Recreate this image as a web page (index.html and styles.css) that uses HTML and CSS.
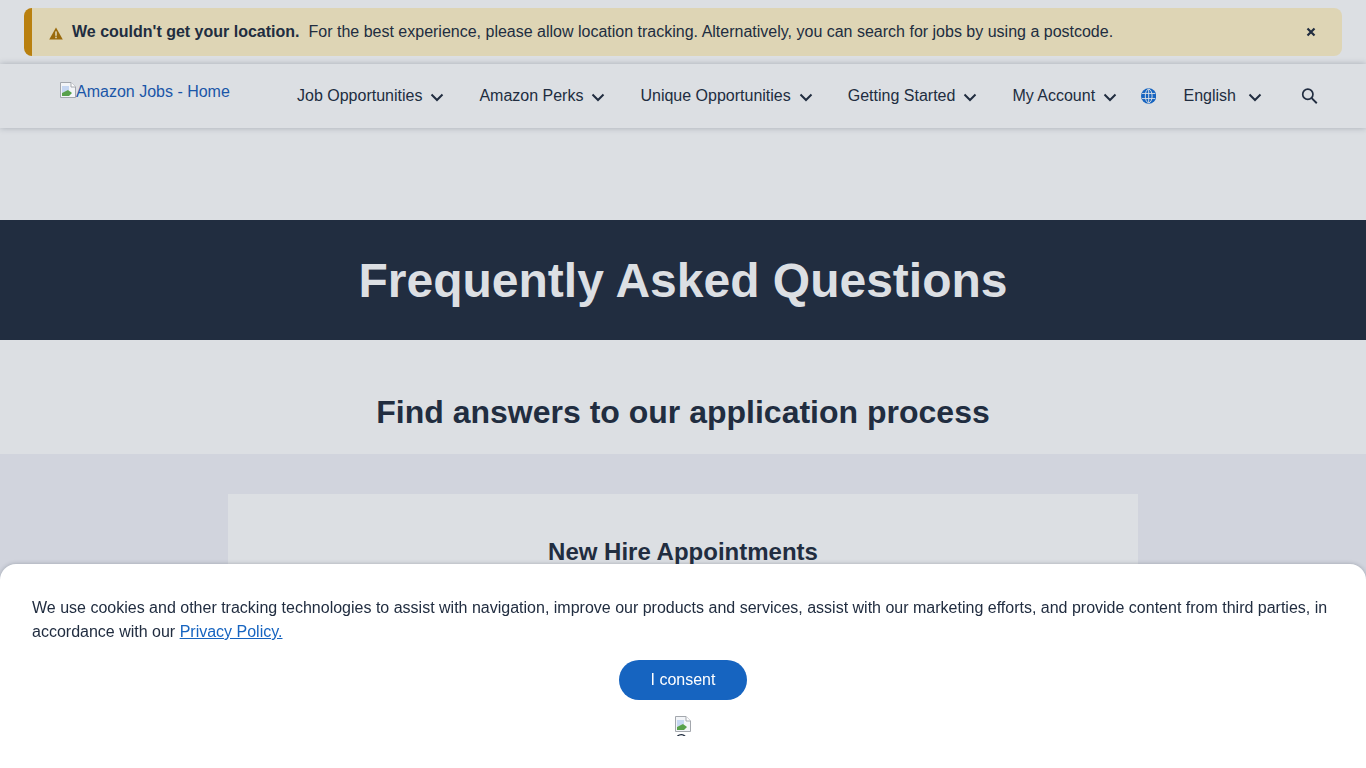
FILE: index.html
```html
<!DOCTYPE html>
<html lang="en">
<head>
    <meta charset="UTF-8">
    <meta name="viewport" content="width=device-width, initial-scale=1.0">
    <title>Amazon Jobs - Frequently Asked Questions</title>
    <link rel="stylesheet" href="styles.css">
</head>
<body>
    <div class="alert-wrap">
        <div class="alert">
            <svg class="alert-icon" width="14" height="13" viewBox="0 0 14 13"><path d="M7 0.5 L13.8 12.6 H0.2 Z" fill="#9a6a0c"/><rect x="6.2" y="4.4" width="1.6" height="4.4" fill="#ded5b5"/><rect x="6.2" y="9.6" width="1.6" height="1.6" fill="#ded5b5"/></svg>
            <strong class="alert-title">We couldn't get your location.</strong>
            <span class="alert-text">For the best experience, please allow location tracking. Alternatively, you can search for jobs by using a postcode.</span>
            <button class="alert-close" aria-label="Close">
                <svg width="10" height="10" viewBox="0 0 10 10"><path d="M1.5 1.5 L8.5 8.5 M8.5 1.5 L1.5 8.5" stroke="#212d40" stroke-width="2.2"/></svg>
            </button>
        </div>
    </div>

    <nav class="nav">
        <a class="logo" href="#">
            <svg class="broken" width="16" height="16" viewBox="0 0 16 16"><path d="M0.5 0.5 H11 L15.5 5 V15.5 H0.5 Z" fill="#f3f5f8" stroke="#a3a7ad"/><path d="M11 0.5 V5 H15.5" fill="#fff" stroke="#a3a7ad"/><path d="M2 4 H9 V8 L2 11 Z" fill="#c6d7f2"/><path d="M2 14 V11 L8 8 L12 11 L9 14 Z" fill="#58a14b"/></svg>Amazon Jobs - Home
        </a>
        <ul class="menu">
            <li class="menu-item">Job Opportunities <svg class="chev" width="14" height="9" viewBox="0 0 14 9"><path d="M1.5 1.5 L7 7 L12.5 1.5" fill="none" stroke="#212d40" stroke-width="2"/></svg></li>
            <li class="menu-item">Amazon Perks <svg class="chev" width="14" height="9" viewBox="0 0 14 9"><path d="M1.5 1.5 L7 7 L12.5 1.5" fill="none" stroke="#212d40" stroke-width="2"/></svg></li>
            <li class="menu-item">Unique Opportunities <svg class="chev" width="14" height="9" viewBox="0 0 14 9"><path d="M1.5 1.5 L7 7 L12.5 1.5" fill="none" stroke="#212d40" stroke-width="2"/></svg></li>
            <li class="menu-item">Getting Started <svg class="chev" width="14" height="9" viewBox="0 0 14 9"><path d="M1.5 1.5 L7 7 L12.5 1.5" fill="none" stroke="#212d40" stroke-width="2"/></svg></li>
            <li class="menu-item">My Account <svg class="chev" width="14" height="9" viewBox="0 0 14 9"><path d="M1.5 1.5 L7 7 L12.5 1.5" fill="none" stroke="#212d40" stroke-width="2"/></svg></li>
        </ul>
        <svg class="globe" width="18" height="18" viewBox="0 0 18 18"><circle cx="9" cy="9" r="9" fill="#1664c0"/><g fill="none" stroke="#dcdfe3" stroke-width="1.1"><ellipse cx="9" cy="9" rx="4" ry="8"/><path d="M9 1 V17 M1.2 6 H16.8 M1.2 12 H16.8"/></g></svg>
        <div class="lang">English <svg class="chev" width="14" height="9" viewBox="0 0 14 9"><path d="M1.5 1.5 L7 7 L12.5 1.5" fill="none" stroke="#212d40" stroke-width="2"/></svg></div>
        <svg class="search" width="20" height="20" viewBox="0 0 20 20"><circle cx="8" cy="8" r="6" fill="none" stroke="#212d40" stroke-width="2"/><path d="M12.5 12.5 L18.5 18.5" stroke="#212d40" stroke-width="2.2"/></svg>
    </nav>

    <header class="hero">
        <h1>Frequently Asked Questions</h1>
    </header>

    <div class="subhead">
        <h2>Find answers to our application process</h2>
    </div>

    <section class="faq">
        <div class="faq-card">
            <h3>New Hire Appointments</h3>
        </div>
    </section>

    <div class="cookie">
        <p>We use cookies and other tracking technologies to assist with navigation, improve our products and services, assist with our marketing efforts, and provide content from third parties, in accordance with our <a href="#">Privacy Policy.</a></p>
        <button class="consent">I consent</button>
        <div class="cookie-img">
            <svg width="16" height="16" viewBox="0 0 16 16"><path d="M0.5 0.5 H11 L15.5 5 V15.5 H0.5 Z" fill="#f3f5f8" stroke="#a3a7ad"/><path d="M11 0.5 V5 H15.5" fill="#fff" stroke="#a3a7ad"/><path d="M2 4 H9 V8 L2 11 Z" fill="#c6d7f2"/><path d="M2 14 V11 L8 8 L12 11 L9 14 Z" fill="#58a14b"/></svg>
            <span class="cookie-alt">O</span>
        </div>
    </div>
</body>
</html>
```

FILE: styles.css
```css
html, body {
    height: 100%;
    overflow: hidden;
}
body {
    margin: 0;
    font-family: "Liberation Sans", Arial, sans-serif;
    font-size: 16px;
    color: #212d40;
    background-color: #dcdfe3;
}

/* Alert */
.alert-wrap {
    padding: 8px 24px;
}
.alert {
    display: flex;
    align-items: center;
    height: 48px;
    box-sizing: border-box;
    padding: 0 24px 0 17px;
    background-color: #ded5b5;
    border-left: 8px solid #b9800f;
    border-radius: 8px;
}
.alert-icon {
    margin-right: 9px;
    margin-top: 2px;
}
.alert-title {
    margin-right: 9px;
}
.alert-text {
    flex: 1;
}
.alert-close {
    display: flex;
    padding: 0;
    margin-right: 2px;
    border: none;
    background: none;
}

/* Nav */
.nav {
    position: relative;
    display: flex;
    align-items: center;
    height: 64px;
    padding: 0 48px 0 60px;
    background-color: #dcdfe3;
    box-shadow: 0 0 6px rgba(33, 45, 64, 0.28);
}
.logo {
    align-self: flex-start;
    width: 237px;
    flex-shrink: 0;
    margin-top: 18px;
    line-height: 18px;
    color: #1a56a8;
    text-decoration: none;
}
.broken {
    vertical-align: -1px;
}
.menu {
    display: flex;
    gap: 35px;
    margin: 0;
    padding: 0;
    list-style: none;
}
.menu-item {
    display: flex;
    align-items: center;
    gap: 8px;
    white-space: nowrap;
}
.chev {
    flex-shrink: 0;
    margin-top: 2px;
}
.globe {
    margin-left: 24px;
}
.lang {
    display: flex;
    align-items: center;
    gap: 12px;
    margin-left: 27px;
}
.search {
    margin-left: 39px;
}

/* Headings */
.hero {
    margin-top: 92px;
    height: 120px;
    display: flex;
    align-items: center;
    justify-content: center;
    background-color: #212d40;
}
h1 {
    margin: 0;
    font-size: 48px;
    font-weight: bold;
    color: #dcdfe3;
}
.subhead {
    height: 114px;
    box-sizing: border-box;
    padding-top: 54px;
    text-align: center;
}
h2 {
    margin: 0;
    font-size: 32px;
    line-height: 36px;
}
.faq {
    height: 400px;
    padding-top: 40px;
    background-color: #d1d4dd;
}
.faq-card {
    width: 910px;
    height: 300px;
    margin: 0 auto;
    box-sizing: border-box;
    padding-top: 44px;
    text-align: center;
    background-color: #dcdfe3;
}
h3 {
    margin: 0;
    font-size: 24px;
    line-height: 28px;
}

/* Cookie banner */
.cookie {
    position: fixed;
    left: 0;
    right: 0;
    bottom: 0;
    height: 204px;
    box-sizing: border-box;
    padding: 32px 32px 0;
    text-align: center;
    background-color: #fff;
    border-radius: 16px 16px 0 0;
    box-shadow: 0 0 4px rgba(33, 45, 64, 0.3);
}
.cookie p {
    margin: 0 0 16px;
    line-height: 24px;
    text-align: left;
}
.cookie a {
    color: #1664c0;
}
.consent {
    display: block;
    width: 128px;
    height: 40px;
    margin: 0 auto;
    padding: 0;
    font-family: inherit;
    font-size: 16px;
    color: #fff;
    background-color: #1664c0;
    border: none;
    border-radius: 20px;
}
.cookie-img {
    position: relative;
    width: 16px;
    height: 20px;
    margin: 16px auto 0;
    overflow: hidden;
    line-height: 0;
}
.cookie-alt {
    position: absolute;
    left: 0;
    top: 16px;
    font-size: 16px;
    line-height: 18px;
}
```
